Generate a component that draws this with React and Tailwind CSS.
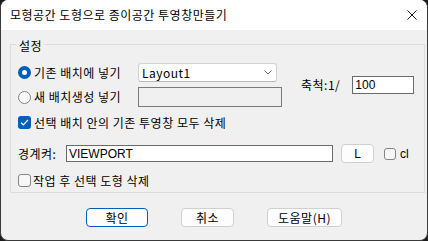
import React from "react";

const lat = "font-['Liberation_Sans',Arial,sans-serif] tracking-normal";

function Radio(props) {
  if (props.checked) {
    return (
      <span className="flex h-[13px] w-[13px] shrink-0 items-center justify-center rounded-full bg-[#005fb8]">
        <span className="h-[5px] w-[5px] rounded-full bg-white" />
      </span>
    );
  }
  return <span className="h-[13px] w-[13px] shrink-0 rounded-full border border-[#858585] bg-[#f7f7f7]" />;
}

function Check(props) {
  const size = props.small ? "h-[12px] w-[12px]" : "h-[13px] w-[13px]";
  if (props.checked) {
    return (
      <span className={`flex ${size} shrink-0 items-center justify-center rounded-[3px] bg-[#005fb8]`}>
        <svg width="9" height="7" viewBox="0 0 9 7" fill="none">
          <path d="M1 3.6 L3.3 5.8 L8 1" stroke="white" strokeWidth="1.2" />
        </svg>
      </span>
    );
  }
  return <span className={`block ${size} shrink-0 rounded-[3px] border border-[#858585] bg-[#f7f7f7]`} />;
}

function Button(props) {
  return (
    <div
      className={`flex h-[19px] items-center justify-center rounded-[4px] bg-[#fdfdfd] text-[12px] leading-[16px] text-black ${
        props.primary ? "border border-[#005fb8]" : "border border-[#d0d0d0]"
      } ${props.width}`}
    >
      {props.children}
    </div>
  );
}

export default function App() {
  return (
    <div className="h-[241px] w-[428px] bg-[#1c1c1c] font-['Noto_Sans_CJK_KR','Noto_Sans',sans-serif] tracking-[0.5px]">
      <div className="flex h-full flex-col overflow-hidden rounded-[8px] border-x border-b border-[#3a3a3a] bg-[#f0f0f0] text-black">
        <div className="flex h-[30px] shrink-0 items-center justify-between bg-white pl-[9px] pr-[10px]">
          <span className="text-[12px] leading-[16px]">모형공간 도형으로 종이공간 투영창만들기</span>
          <svg width="10" height="10" viewBox="0 0 10 10">
            <path d="M0.5 0.5 L9.5 9.5 M9.5 0.5 L0.5 9.5" stroke="#1a1a1a" strokeWidth="1" />
          </svg>
        </div>

        <div className="pl-[9px] pt-[14px]">
          <div className="relative h-[149px] w-[415px] border border-[#dcdcdc] pl-[7px] pt-[18px]">
            <span className="absolute left-[6px] top-[-7px] bg-[#f0f0f0] px-[2px] text-[12px] leading-[16px]">
              설정
            </span>

            <div className="flex items-center">
              <div className="flex flex-col gap-[5px]">
                <div className="flex h-[19px] items-center">
                  <Radio checked />
                  <span className="ml-[3px] w-[104px] text-[12px] leading-[16px]">기존 배치에 넣기</span>
                  <div className="flex h-[19px] w-[139px] items-center justify-between rounded-[3px] border border-[#d2d2d2] border-b-[#b8b8b8] bg-white pl-[3px] pr-[4px]">
                    <span className="text-[12px] leading-[16px]">Layout1</span>
                    <svg width="8" height="5" viewBox="0 0 8 5" fill="none">
                      <path d="M0.5 0.5 L4 4 L7.5 0.5" stroke="#6b6b6b" strokeWidth="1" />
                    </svg>
                  </div>
                </div>
                <div className="flex h-[20px] items-center">
                  <Radio />
                  <span className="ml-[3px] w-[104px] text-[12px] leading-[16px]">새 배치생성 넣기</span>
                  <div className="h-[20px] w-[144px] border border-[#7a7a7a] bg-[#f0f0f0]" />
                </div>
              </div>
              <span className="ml-[19px] text-[12px] leading-[16px]">축척:1/</span>
              <div className="ml-[12px] flex h-[18px] w-[62px] items-center border border-[#6a6a6a] bg-white pl-[2px]">
                <span className={`text-[12px] leading-[14px] ${lat}`}>100</span>
              </div>
            </div>

            <div className="mt-[9px] flex h-[13px] items-center">
              <Check checked />
              <span className="ml-[3px] text-[12px] leading-[16px]">선택 배치 안의 기존 투영창 모두 삭제</span>
            </div>

            <div className="mt-[15px] flex h-[19px] items-center">
              <span className="w-[48px] text-[12px] leading-[16px]">경계켜:</span>
              <div className="flex h-[17px] w-[267px] items-center border border-[#6a6a6a] bg-white pl-[2px]">
                <span className={`text-[12px] leading-[14px] ${lat}`}>VIEWPORT</span>
              </div>
              <div
                className={`ml-[8px] flex h-[19px] w-[33px] items-center justify-center rounded-[4px] border border-[#d0d0d0] bg-[#fdfdfd] text-[12px] leading-[14px] ${lat}`}
              >
                L
              </div>
              <div className="ml-[10px] flex">
                <Check small />
              </div>
              <span className={`ml-[4px] text-[12px] leading-[14px] ${lat}`}>cl</span>
            </div>

            <div className="mt-[11px] flex h-[13px] items-center">
              <Check />
              <span className="ml-[2px] text-[12px] leading-[16px]">작업 후 선택 도형 삭제</span>
            </div>
          </div>
        </div>

        <div className="ml-[85px] mt-[15px] flex gap-[33px]">
          <Button primary width="w-[62px]">
            확인
          </Button>
          <Button width="w-[53px]">취소</Button>
          <Button width="w-[75px]">도움말(H)</Button>
        </div>
      </div>
    </div>
  );
}
